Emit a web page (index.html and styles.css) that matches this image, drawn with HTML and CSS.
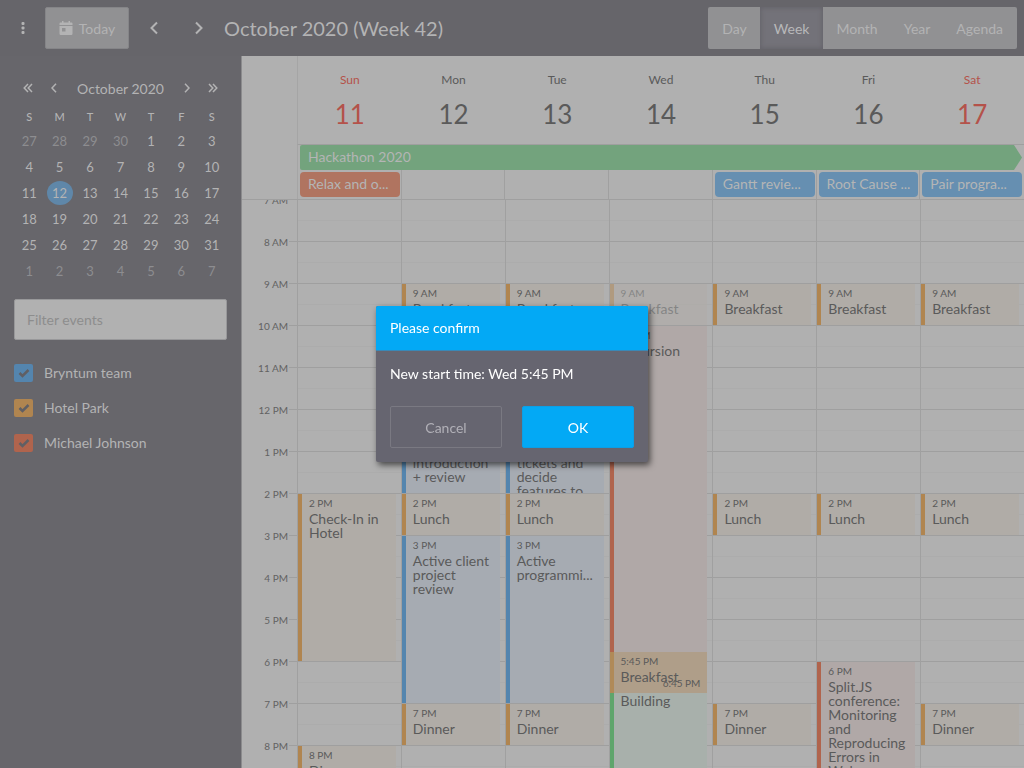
FILE: index.html
```html
<!DOCTYPE html>
<html lang="en">
<head>
<meta charset="utf-8">
<title>Calendar</title>
<link rel="stylesheet" href="styles.css">
</head>
<body>
<div class="app">
  <header class="toolbar">
    <button class="icon-btn menu-btn" aria-label="Toggle sidebar"><svg width="4" height="14" viewBox="0 0 4 14" fill="currentColor"><rect x="0.5" y="1" width="3" height="3" rx="1"/><rect x="0.5" y="5.5" width="3" height="3" rx="1"/><rect x="0.5" y="10" width="3" height="3" rx="1"/></svg></button>
    <button class="btn today-btn"><svg width="14" height="14" viewBox="0 0 14 14"><path fill="currentColor" fill-rule="evenodd" d="M1.5 1.5H3V0h1.5v1.5h5V0H11v1.5h1.5Q13.500 1.500 13.500 2.500V4H.5V2.500Q.5 1.500 1.500 1.500ZM.5 5h13v7.500Q13.500 14 12.300 14H1.700Q.5 14 .5 12.500ZM3 7v3.500h3.500V7Z"/></svg>Today</button>
    <button class="icon-btn prev-btn" aria-label="Previous week"><svg width="8" height="14" viewBox="0 0 8 14"><path class="stroke" d="M7 1.500 1.500 7 7 12.500"/></svg></button>
    <button class="icon-btn next-btn" aria-label="Next week"><svg width="8" height="14" viewBox="0 0 8 14"><path class="stroke" d="M1 1.500 6.500 7 1 12.500"/></svg></button>
    <h1 class="title">October 2020 (Week 42)</h1>
    <div class="views">
      <button class="view">Day</button><button class="view active">Week</button><button class="view">Month</button><button class="view">Year</button><button class="view">Agenda</button>
    </div>
  </header>

  <div class="content">
    <aside class="sidebar">
      <div class="month-nav">
        <button class="nav-btn" aria-label="Previous year"><svg width="10" height="10" viewBox="0 0 10 10"><path class="thin" d="M5 1 1.200 5 5 9M9 1 5.200 5 9 9"/></svg></button>
        <button class="nav-btn" aria-label="Previous month"><svg width="6" height="10" viewBox="0 0 6 10"><path class="thin" d="M5 .8 1 5l4 4.200"/></svg></button>
        <span class="month-name">October 2020</span>
        <button class="nav-btn" aria-label="Next month"><svg width="6" height="10" viewBox="0 0 6 10"><path class="thin" d="M1 .8 5 5 1 9.200"/></svg></button>
        <button class="nav-btn" aria-label="Next year"><svg width="10" height="10" viewBox="0 0 10 10"><path class="thin" d="M1 1l3.800 4L1 9M5 1l3.800 4L5 9"/></svg></button>
      </div>
      <table class="month">
        <thead><tr><th>S</th><th>M</th><th>T</th><th>W</th><th>T</th><th>F</th><th>S</th></tr></thead>
        <tbody>
          <tr><td class="other">27</td><td class="other">28</td><td class="other">29</td><td class="other">30</td><td>1</td><td>2</td><td>3</td></tr>
          <tr><td>4</td><td>5</td><td>6</td><td>7</td><td>8</td><td>9</td><td>10</td></tr>
          <tr><td>11</td><td><span class="selected">12</span></td><td>13</td><td>14</td><td>15</td><td>16</td><td>17</td></tr>
          <tr><td>18</td><td>19</td><td>20</td><td>21</td><td>22</td><td>23</td><td>24</td></tr>
          <tr><td>25</td><td>26</td><td>27</td><td>28</td><td>29</td><td>30</td><td>31</td></tr>
          <tr><td class="other">1</td><td class="other">2</td><td class="other">3</td><td class="other">4</td><td class="other">5</td><td class="other">6</td><td class="other">7</td></tr>
        </tbody>
      </table>
      <input class="filter" type="text" placeholder="Filter events" aria-label="Filter events">
      <div class="resources">
        <label class="resource"><span class="check"><input type="checkbox" class="box blue" checked><svg class="tick" width="12" height="10" viewBox="0 0 12 10"><path d="M1.500 5 4.500 8 10.500 2"/></svg></span>Bryntum team</label>
        <label class="resource"><span class="check"><input type="checkbox" class="box orange" checked><svg class="tick" width="12" height="10" viewBox="0 0 12 10"><path d="M1.500 5 4.500 8 10.500 2"/></svg></span>Hotel Park</label>
        <label class="resource"><span class="check"><input type="checkbox" class="box red" checked><svg class="tick" width="12" height="10" viewBox="0 0 12 10"><path d="M1.500 5 4.500 8 10.500 2"/></svg></span>Michael Johnson</label>
      </div>
    </aside>

    <main class="week">
      <div class="days-header">
        <div class="day-head weekend"><span class="dow">Sun</span><span class="num">11</span></div>
        <div class="day-head"><span class="dow">Mon</span><span class="num">12</span></div>
        <div class="day-head"><span class="dow">Tue</span><span class="num">13</span></div>
        <div class="day-head"><span class="dow">Wed</span><span class="num">14</span></div>
        <div class="day-head"><span class="dow">Thu</span><span class="num">15</span></div>
        <div class="day-head"><span class="dow">Fri</span><span class="num">16</span></div>
        <div class="day-head weekend"><span class="dow">Sat</span><span class="num">17</span></div>
      </div>
      <div class="all-day">
        <div class="cell c1"></div><div class="cell c2"></div><div class="cell c3"></div><div class="cell c4"></div><div class="cell c5"></div><div class="cell c6"></div><div class="cell c7"></div>
        <div class="bar hackathon">Hackathon 2020</div>
        <div class="bar relax c1">Relax and o...</div>
        <div class="bar task c5">Gantt revie...</div>
        <div class="bar task c6">Root Cause ...</div>
        <div class="bar task c7">Pair progra...</div>
      </div>
      <div class="schedule">
        <div class="hours">
          <div class="hour">7 AM</div><div class="hour">8 AM</div><div class="hour">9 AM</div><div class="hour">10 AM</div><div class="hour">11 AM</div><div class="hour">12 PM</div><div class="hour">1 PM</div><div class="hour">2 PM</div><div class="hour">3 PM</div><div class="hour">4 PM</div><div class="hour">5 PM</div><div class="hour">6 PM</div><div class="hour">7 PM</div><div class="hour">8 PM</div>
        </div>
        <div class="day">
          <div class="event orange" style="grid-row:29/45"><time>2 PM</time><p>Check-In in Hotel</p></div>
          <div class="event orange" style="grid-row:53/57"><time>8 PM</time><p>Dinner</p></div>
        </div>
        <div class="day">
          <div class="event orange" style="grid-row:9/13"><time>9 AM</time><p>Breakfast</p></div>
          <div class="event blue" style="grid-row:21/29"><time>12 PM</time><p>Project<br>client<br>introduction<br>+ review</p></div>
          <div class="event orange" style="grid-row:29/33"><time>2 PM</time><p>Lunch</p></div>
          <div class="event blue" style="grid-row:33/49"><time>3 PM</time><p>Active client project review</p></div>
          <div class="event orange" style="grid-row:49/53"><time>7 PM</time><p>Dinner</p></div>
        </div>
        <div class="day">
          <div class="event orange" style="grid-row:9/13"><time>9 AM</time><p>Breakfast</p></div>
          <div class="event blue" style="grid-row:21/29"><time>12 PM</time><p>Planning,<br>review<br>tickets and<br>decide<br>features to</p></div>
          <div class="event orange" style="grid-row:29/33"><time>2 PM</time><p>Lunch</p></div>
          <div class="event blue" style="grid-row:33/49"><time>3 PM</time><p>Active programmi...</p></div>
          <div class="event orange" style="grid-row:49/53"><time>7 PM</time><p>Dinner</p></div>
        </div>
        <div class="day">
          <div class="event orange moved" style="grid-row:9/13"><time>9 AM</time><p>Breakfast</p></div>
          <div class="event red" style="grid-row:13/45"><time>10 AM</time><p>Excursion</p></div>
          <div class="event green" style="grid-row:45/57"><time>6 PM</time><p>Team Building</p></div>
          <div class="event orange dragging" style="grid-row:44/48"><time>5:45 PM</time><p>Breakfast</p><time class="end">6:45 PM</time></div>
        </div>
        <div class="day">
          <div class="event orange" style="grid-row:9/13"><time>9 AM</time><p>Breakfast</p></div>
          <div class="event orange" style="grid-row:29/33"><time>2 PM</time><p>Lunch</p></div>
          <div class="event orange" style="grid-row:49/53"><time>7 PM</time><p>Dinner</p></div>
        </div>
        <div class="day">
          <div class="event orange" style="grid-row:9/13"><time>9 AM</time><p>Breakfast</p></div>
          <div class="event orange" style="grid-row:29/33"><time>2 PM</time><p>Lunch</p></div>
          <div class="event red" style="grid-row:45/57"><time>6 PM</time><p>Split.JS conference: Monitoring and Reproducing Errors in Web</p></div>
        </div>
        <div class="day">
          <div class="event orange" style="grid-row:9/13"><time>9 AM</time><p>Breakfast</p></div>
          <div class="event orange" style="grid-row:29/33"><time>2 PM</time><p>Lunch</p></div>
          <div class="event orange" style="grid-row:49/53"><time>7 PM</time><p>Dinner</p></div>
        </div>
      </div>
    </main>
  </div>
</div>

<div class="dialog" role="dialog" aria-labelledby="dialog-title">
  <h2 class="dialog-title" id="dialog-title">Please confirm</h2>
  <p class="dialog-text">New start time: Wed 5:45 PM</p>
  <div class="dialog-actions">
    <button class="dialog-btn cancel">Cancel</button>
    <button class="dialog-btn ok">OK</button>
  </div>
</div>
</body>
</html>
```

FILE: styles.css
```css
* { box-sizing: border-box; }
body { margin: 0; font-family: Lato, "Liberation Sans", sans-serif; font-size: 14px; color: #b3b3b4; background: #67666b; }
button, input { font: inherit; color: inherit; }
button { border: 0; padding: 0; background: none; }
h1, h2, p { margin: 0; font-weight: 400; }
svg { display: block; }
.stroke { fill: none; stroke: currentColor; stroke-width: 2; }
.thin { fill: none; stroke: currentColor; stroke-width: 1.500; }

.app { display: flex; flex-direction: column; height: 100vh; overflow: hidden; }

.toolbar { display: flex; align-items: center; height: 56px; flex: none; padding: 0 7px 0 0; background: #66656a; }
.icon-btn { display: flex; align-items: center; justify-content: center; height: 42px; width: 45px; }
.next-btn { margin-right: 3px; }
.prev-btn { margin-left: 2px; }
.btn, .views { height: 42px; border-radius: 2px; background: #919193; }
.today-btn { display: flex; align-items: center; justify-content: center; gap: 6px; width: 84px; border: 1px solid #858588; }
.title { font-size: 20px; line-height: 24px; }
.views { display: flex; margin-left: auto; padding: 0 1px; overflow: hidden; }
.view { padding: 0 13px; }
.view.active { padding: 0 14px; background: #737279; box-shadow: inset 0 0 4px 1px #65646a; color: #b8b8b9; }

.content { display: flex; flex: 1; min-height: 0; }
.sidebar { width: 242px; flex: none; padding: 19px 14px 0; border-right: 1px solid #8b8b8d; }
.month-nav { display: flex; align-items: center; height: 26px; padding-right: 1px; }
.nav-btn { display: flex; justify-content: center; width: 26px; height: 26px; align-items: center; }
.nav-btn:first-child { width: 27px; }
.month-name { flex: 1; text-align: center; }
.month { width: 100%; table-layout: fixed; border-collapse: collapse; }
.month th, .month td { padding: 0; height: 26px; text-align: center; font-size: 13px; line-height: 24px; }
.month th { height: 27px; font-size: 11px; font-weight: 500; padding-top: 5px; line-height: 22px; }
.month .other { color: #8d8d90; }
.selected { display: block; width: 26px; height: 24px; margin: 0 auto; border-radius: 50%; background: #5f87a9; }
.filter { display: block; width: 100%; height: 41px; margin-top: 15px; padding: 0 12px; border: 1px solid #98989a; border-radius: 2px; background: #b1b1b1; color: #636363; }
.filter::placeholder { color: #8d8d8d; opacity: 1; }
.resources { display: flex; flex-direction: column; gap: 17px; margin-top: 24px; }
.resource { display: flex; align-items: center; gap: 11px; line-height: 18px; }
.check { display: grid; place-items: center; }
.box { grid-area: 1 / 1; appearance: none; width: 19px; height: 18px; margin: 0; border-radius: 2px; }
.tick { grid-area: 1 / 1; pointer-events: none; }
.tick path { fill: none; stroke: #605f64; stroke-width: 2.500; }
.box.blue { background: #5485ae; }
.box.orange { background: #b08550; }
.box.red { background: #b0644d; }

.week { flex: 1; min-width: 0; display: flex; flex-direction: column; background: #b0b0b0; color: #5a5a5a; }
.days-header, .all-day { display: grid; grid-template-columns: repeat(7, minmax(0, 1fr)); margin-left: 55px; border-left: 1px solid #a5a5a5; }
.days-header { height: 89px; border-bottom: 1px solid #9f9f9f; }
.day-head { display: flex; flex-direction: column; align-items: center; padding-top: 16px; }
.dow { font-size: 12px; line-height: 16px; }
.num { margin-top: 10px; font-size: 26px; line-height: 32px; }
.weekend { color: #b4524a; }

.all-day { height: 54px; grid-template-rows: 25px 25px; row-gap: 2px; }
.c1 { grid-column: 1; } .c2 { grid-column: 2; } .c3 { grid-column: 3; } .c4 { grid-column: 4; } .c5 { grid-column: 5; } .c6 { grid-column: 6; } .c7 { grid-column: 7; }
.cell { grid-row: 1 / 3; margin-bottom: -2px; border-right: 1px solid #a0a0a0; }
.cell.c7 { border-right: 0; }
.bar { margin: 0 2px; padding: 0 8px; line-height: 24px; border-radius: 4px; white-space: nowrap; overflow: hidden; color: #b4b5b5; }
.hackathon { grid-column: 1 / 8; grid-row: 1; background: #73a37d; border-radius: 2px; clip-path: polygon(0 0, calc(100% - 8px) 0, 100% 50%, calc(100% - 8px) 100%, 0 100%); }
.relax { background: #b07460; }
.task { background: #668fb1; }
.relax, .task { grid-row: 2; }

.schedule { flex: 1; min-height: 0; overflow: hidden; display: grid; grid-template-columns: 55px repeat(7, minmax(0, 1fr)); border-top: 1px solid #9f9f9f; background: #b0b0b0; }
.hours, .day { height: 588px; }
.hour { height: 42px; padding-right: 9px; font-size: 10px; line-height: 0; text-align: right; color: #626262; background: linear-gradient(#9f9f9f, #9f9f9f) right bottom / 8px 1px no-repeat; }
.day { display: grid; grid-template-rows: repeat(56, 1fr); border-left: 1px solid #a0a0a0; background: repeating-linear-gradient(transparent 0 20px, #acacac 20px 21px, transparent 21px 41px, #9f9f9f 41px 42px); }
.event { grid-column: 1; position: relative; min-height: 0; overflow: hidden; margin: 0 5px 1px 0; padding: 3px 0 0 7px; border-left: 4px solid; }
.event time { display: block; font-size: 10px; line-height: 12px; color: #5a5a5a; }
.event p { margin-top: 3px; padding-right: 6px; line-height: 14px; color: #5a5a5a; }
.event.orange { border-color: #b08550; background: #b0aca7; }
.event.blue { border-color: #5485ae; background: #a6abb2; }
.event.red { border-color: #b0644d; background: #b0a8a7; }
.event.green { border-color: #5fa56c; background: #a8b0ab; }
.event.moved { opacity: .5; }
.event.dragging { border-color: #b08a58; background: #af9e89; }
.event .end { position: absolute; right: 7px; bottom: 4px; }

.dialog { position: fixed; top: 50%; left: 50%; width: 272px; transform: translate(-50%, -50%); background: #666570; color: #fff; border-radius: 2px; overflow: hidden; box-shadow: 2px 3px 6px rgba(0, 0, 0, .6); }
.dialog-title { height: 45px; padding: 0 14px; font-size: 14px; line-height: 44px; background: #03a9f5; border-bottom: 1px solid #3a88b6; }
.dialog-text { padding: 14px 14px 0; line-height: 18px; }
.dialog-actions { display: grid; grid-template-columns: 1fr 1fr; gap: 20px; padding: 23px 14px 14px; }
.dialog-btn { height: 42px; border: 1px solid #7a7982; border-radius: 2px; color: #b1b0b7; }
.dialog-btn.ok { border-color: #0c9fe6; background: #03a9f5; color: #fff; }
```
